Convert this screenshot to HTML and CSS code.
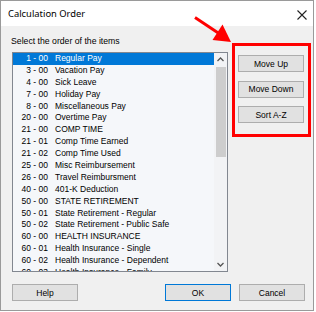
FILE: index.html
```html
<!DOCTYPE html>
<html lang="en">
<head>
  <meta charset="UTF-8" />
  <title>Calculation Order</title>
  <link rel="stylesheet" href="styles.css">
</head>
<body>
  <div class="window">
    <div class="titlebar">
      <span class="title">Calculation Order</span>
      <svg class="close" width="10" height="10" viewBox="0 0 10 10">
        <path d="M0.5 0.5 L9.5 9.5 M9.5 0.5 L0.5 9.5" stroke="#222" stroke-width="1.1" fill="none" />
      </svg>
    </div>

    <div class="client">
      <div class="main">
        <div class="left">
          <div class="label">Select the order of the items</div>
          <div class="listbox">
            <div class="items">
              <div class="row selected"><span class="num">1 - 00</span><span class="name">Regular Pay</span></div>
              <div class="row"><span class="num">3 - 00</span><span class="name">Vacation Pay</span></div>
              <div class="row"><span class="num">4 - 00</span><span class="name">Sick Leave</span></div>
              <div class="row"><span class="num">7 - 00</span><span class="name">Holiday Pay</span></div>
              <div class="row"><span class="num">8 - 00</span><span class="name">Miscellaneous Pay</span></div>
              <div class="row"><span class="num">20 - 00</span><span class="name">Overtime Pay</span></div>
              <div class="row"><span class="num">21 - 00</span><span class="name">COMP TIME</span></div>
              <div class="row"><span class="num">21 - 01</span><span class="name">Comp Time Earned</span></div>
              <div class="row"><span class="num">21 - 02</span><span class="name">Comp Time Used</span></div>
              <div class="row"><span class="num">25 - 00</span><span class="name">Misc Reimbursement</span></div>
              <div class="row"><span class="num">26 - 00</span><span class="name">Travel Reimbursment</span></div>
              <div class="row"><span class="num">40 - 00</span><span class="name">401-K Deduction</span></div>
              <div class="row"><span class="num">50 - 00</span><span class="name">STATE RETIREMENT</span></div>
              <div class="row"><span class="num">50 - 01</span><span class="name">State Retirement - Regular</span></div>
              <div class="row"><span class="num">50 - 02</span><span class="name">State Retirement - Public Safe</span></div>
              <div class="row"><span class="num">60 - 00</span><span class="name">HEALTH INSURANCE</span></div>
              <div class="row"><span class="num">60 - 01</span><span class="name">Health Insurance - Single</span></div>
              <div class="row"><span class="num">60 - 02</span><span class="name">Health Insurance - Dependent</span></div>
              <div class="row"><span class="num">60 - 03</span><span class="name">Health Insurance - Family</span></div>
            </div>
            <div class="scrollbar">
              <div class="arrow">
                <svg width="7" height="5" viewBox="0 0 7 5"><path d="M0.5 4 L3.5 1 L6.5 4" stroke="#555" stroke-width="1.3" fill="none" /></svg>
              </div>
              <div class="thumb"></div>
              <div class="track"></div>
              <div class="arrow">
                <svg width="7" height="5" viewBox="0 0 7 5"><path d="M0.5 1 L3.5 4 L6.5 1" stroke="#555" stroke-width="1.3" fill="none" /></svg>
              </div>
            </div>
          </div>
        </div>

        <div class="actions">
          <button class="btn">Move Up</button>
          <button class="btn">Move Down</button>
          <button class="btn">Sort A-Z</button>
        </div>
      </div>

      <div class="footer">
        <button class="btn">Help</button>
        <button class="btn default">OK</button>
        <button class="btn">Cancel</button>
      </div>
    </div>

    <!-- callout arrow -->
    <svg class="pointer" width="50" height="40" viewBox="190 12 50 40">
      <line x1="195" y1="17.5" x2="219" y2="33.5" stroke="#f00" stroke-width="3" />
      <polygon points="231,42 212.5,40 222.5,24.5" fill="#f00" />
    </svg>
  </div>
</body>
</html>
```

FILE: styles.css
```css
body {
  margin: 0;
  background: #fff;
  font-family: "Liberation Sans", Arial, sans-serif;
}
.window {
  position: relative;
  width: 314px;
  height: 311px;
  box-sizing: border-box;
  border: 1px solid #9a9a9a;
  display: flex;
  flex-direction: column;
  background: #f0f0f0;
}
.titlebar {
  height: 25px;
  background: #fff;
  display: flex;
  align-items: center;
  padding-left: 7px;
}
.title {
  font-family: "Noto Sans", sans-serif;
  font-size: 9.4px;
  color: #000;
}
.close {
  margin-left: auto;
  margin-right: 6px;
  margin-top: 3px;
}
.client {
  flex: 1;
  display: flex;
  flex-direction: column;
}
.main {
  display: flex;
  padding-left: 10px;
}
.left {
  width: 217px;
  padding-top: 10px;
}
.label {
  font-size: 8.7px;
  line-height: 11px;
  color: #000;
}
.listbox {
  margin-top: 5px;
  margin-left: 1px;
  width: 216px;
  height: 220px;
  box-sizing: border-box;
  border: 1px solid #828790;
  background: #f5f7fa;
  display: flex;
  overflow: hidden;
}
.items {
  flex: 1;
  overflow: hidden;
}
.row {
  display: flex;
  height: 11.9px;
  line-height: 11.9px;
  font-size: 8.5px;
  color: #000;
  white-space: nowrap;
}
.row.selected {
  background: #0078d7;
  color: #fff;
}
.num {
  width: 35px;
  text-align: right;
}
.name {
  margin-left: 7px;
}
.scrollbar {
  width: 13px;
  display: flex;
  flex-direction: column;
  background: #f2f3f5;
}
.arrow {
  height: 13px;
  display: flex;
  align-items: center;
  justify-content: center;
}
.thumb {
  height: 90px;
  margin: 1px 1px 0 2px;
  background: #cdcdcd;
}
.track {
  flex: 1;
}
.actions {
  margin-left: 4px;
  margin-top: 17px;
  width: 79px;
  height: 94px;
  box-sizing: border-box;
  border: 3px solid #f00;
  padding: 9px 0 0 3px;
  display: flex;
  flex-direction: column;
  gap: 8.5px;
}
.btn {
  width: 66px;
  height: 17px;
  box-sizing: border-box;
  padding: 0;
  border: 1px solid #adadad;
  background: #e1e1e1;
  font-family: "Liberation Sans", Arial, sans-serif;
  font-size: 8.5px;
  color: #000;
}
.btn.default {
  border-color: #0078d7;
}
.footer {
  display: flex;
  margin-top: 12px;
  padding: 0 8px 0 11px;
}
.footer .default {
  margin-left: auto;
}
.footer .btn + .btn {
  margin-right: 0;
}
.footer .default + .btn {
  margin-left: 8px;
}
.pointer {
  position: absolute;
  left: 189px;
  top: 11px;
}
```
